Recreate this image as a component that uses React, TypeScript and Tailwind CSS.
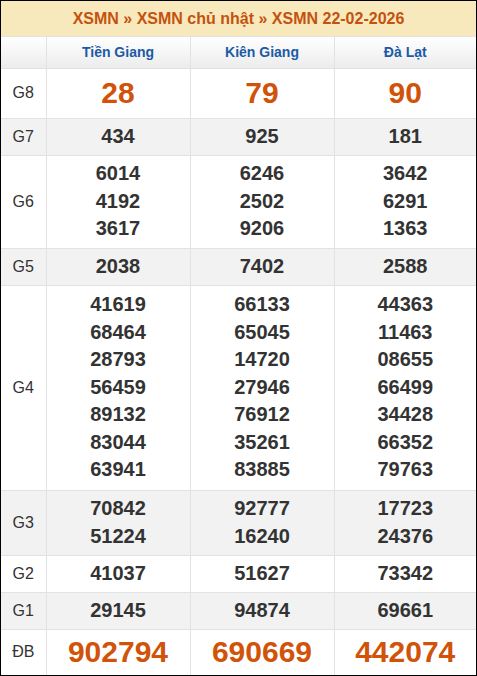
import React from 'react';

type Row = { label: string; values: string[][]; big?: boolean; gray?: boolean; h: string };

const provinces = ['Tiền Giang', 'Kiên Giang', 'Đà Lạt'];

const rows: Row[] = [
  { label: 'G8', values: [['28'], ['79'], ['90']], big: true, h: 'h-[50px]' },
  { label: 'G7', values: [['434'], ['925'], ['181']], gray: true, h: 'h-[37px]' },
  {
    label: 'G6',
    values: [['6014', '4192', '3617'], ['6246', '2502', '9206'], ['3642', '6291', '1363']],
    h: 'h-[93px]',
  },
  { label: 'G5', values: [['2038'], ['7402'], ['2588']], gray: true, h: 'h-[37px]' },
  {
    label: 'G4',
    values: [
      ['41619', '68464', '28793', '56459', '89132', '83044', '63941'],
      ['66133', '65045', '14720', '27946', '76912', '35261', '83885'],
      ['44363', '11463', '08655', '66499', '34428', '66352', '79763'],
    ],
    h: 'h-[205px]',
  },
  { label: 'G3', values: [['70842', '51224'], ['92777', '16240'], ['17723', '24376']], gray: true, h: 'h-[65px]' },
  { label: 'G2', values: [['41037'], ['51627'], ['73342']], h: 'h-[37px]' },
  { label: 'G1', values: [['29145'], ['94874'], ['69661']], gray: true, h: 'h-[37px]' },
  { label: 'ĐB', values: [['902794'], ['690669'], ['442074']], big: true, h: 'h-[46px]' },
];

export default function App() {
  return (
    <div className="w-[477px] h-[676px] bg-white font-['Liberation_Sans',Arial,sans-serif]">
      <div className="border border-black h-full flex flex-col">
        <div className="h-[36px] shrink-0 bg-[#f8e9bd] flex items-center justify-center text-[16px] font-bold text-[#c4520f] border-b border-[#e2e2e2]">
          XSMN » XSMN chủ nhật » XSMN 22-02-2026
        </div>
        <table className="w-full border-collapse table-fixed">
          <colgroup>
            <col className="w-[45px]" />
            <col className="w-[144px]" />
            <col className="w-[144px]" />
            <col />
          </colgroup>
          <thead>
            <tr className="h-[31px] bg-gradient-to-b from-white to-[#ececec]">
              <th className="border-r border-b border-[#e2e2e2]"></th>
              {provinces.map((p, i) => (
                <th
                  key={p}
                  className={`border-b border-[#e2e2e2] text-[14px] font-bold text-[#1c5aa6] ${i < 2 ? 'border-r' : ''}`}
                >
                  {p}
                </th>
              ))}
            </tr>
          </thead>
          <tbody>
            {rows.map((r, ri) => {
              const last = ri === rows.length - 1;
              return (
                <tr key={r.label} className={r.gray ? 'bg-[#f2f2f2]' : 'bg-white'}>
                  <td
                    className={`border-r border-[#e2e2e2] text-center text-[16px] text-[#333] ${last ? '' : 'border-b'} ${r.h}`}
                  >
                    {r.label}
                  </td>
                  {r.values.map((v, i) => (
                    <td
                      key={i}
                      className={`border-[#e2e2e2] text-center align-middle ${last ? '' : 'border-b'} ${
                        i < 2 ? 'border-r' : ''
                      }`}
                    >
                      {v.map((n) => (
                        <div
                          key={n}
                          className={
                            r.big
                              ? 'text-[30px] leading-[40px] font-bold text-[#d05309]'
                              : 'text-[20px] leading-[27.5px] font-bold text-[#333]'
                          }
                        >
                          {n}
                        </div>
                      ))}
                    </td>
                  ))}
                </tr>
              );
            })}
          </tbody>
        </table>
      </div>
    </div>
  );
}
